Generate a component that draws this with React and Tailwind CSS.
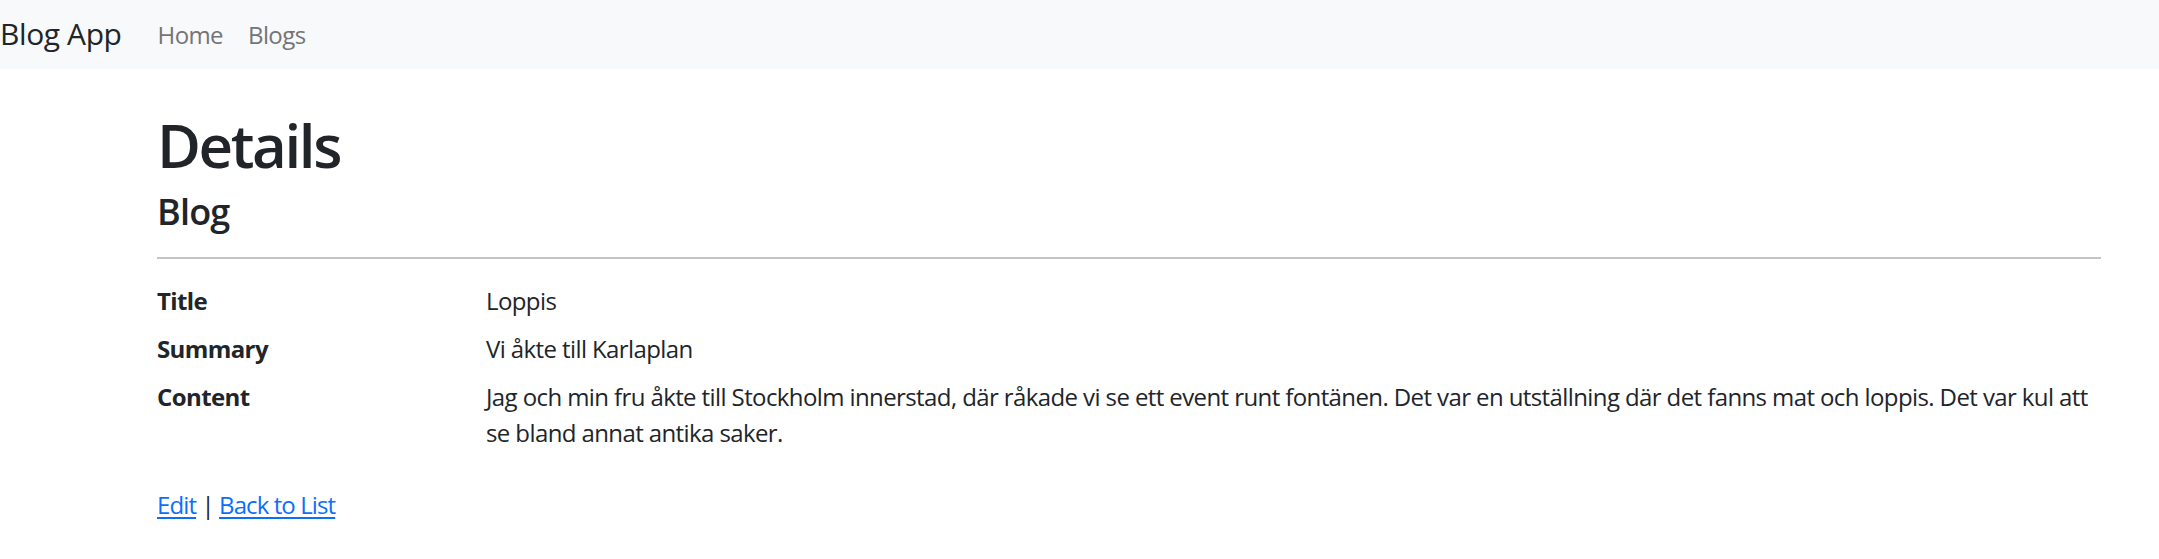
import React from "react";

const fields = [
  { label: "Title", value: "Loppis" },
  { label: "Summary", value: "Vi åkte till Karlaplan" },
  {
    label: "Content",
    value:
      "Jag och min fru åkte till Stockholm innerstad, där råkade vi se ett event runt fontänen. Det var en utställning där det fanns mat och loppis. Det var kul att se bland annat antika saker.",
  },
];

const App = () => {
  return (
    <div className="min-h-screen bg-white text-[#212529] font-['Open_Sans',sans-serif]">
      {/* Navbar */}
      <nav className="h-[69px] bg-[#f8f9fa] flex items-center">
        <a href="#" className="text-[30px] leading-[45px] tracking-[-0.4px] text-[#212529] pb-[2px]">
          Blog App
        </a>
        <ul className="flex items-center ml-[36px] gap-[25px] text-[24px] tracking-[-0.6px] text-[#737576]">
          <li>
            <a href="#">Home</a>
          </li>
          <li>
            <a href="#">Blogs</a>
          </li>
        </ul>
      </nav>

      {/* Main */}
      <main className="ml-[157px] w-[1944px] pt-[40px] pb-[24px] tracking-[-0.6px]">
        <h1 className="text-[60px] leading-[72px] font-semibold tracking-[-2.4px] mb-[12px]">Details</h1>

        <div>
          <h4 className="text-[36px] leading-[43px] font-semibold tracking-[-0.8px] -mt-[3px]">Blog</h4>
          <hr className="mt-[24px] mb-[24px] border-0 border-t-2 border-[#c4c4c4]" />

          <dl className="grid grid-cols-[329px_1609px] text-[24px] leading-[36px]">
            {fields.map((f) => (
              <React.Fragment key={f.label}>
                <dt className="font-bold mb-[12px]">{f.label}</dt>
                <dd className="mb-[12px]">{f.value}</dd>
              </React.Fragment>
            ))}
          </dl>
        </div>

        <div className="mt-[24px] text-[24px] leading-[36px] tracking-[-0.9px]">
          <a href="#" className="text-[#0d6efd] underline underline-offset-[3px]">
            Edit
          </a>{" "}
          |{" "}
          <a href="#" className="text-[#0d6efd] underline underline-offset-[3px]">
            Back to List
          </a>
        </div>
      </main>
    </div>
  );
};

export default App;
